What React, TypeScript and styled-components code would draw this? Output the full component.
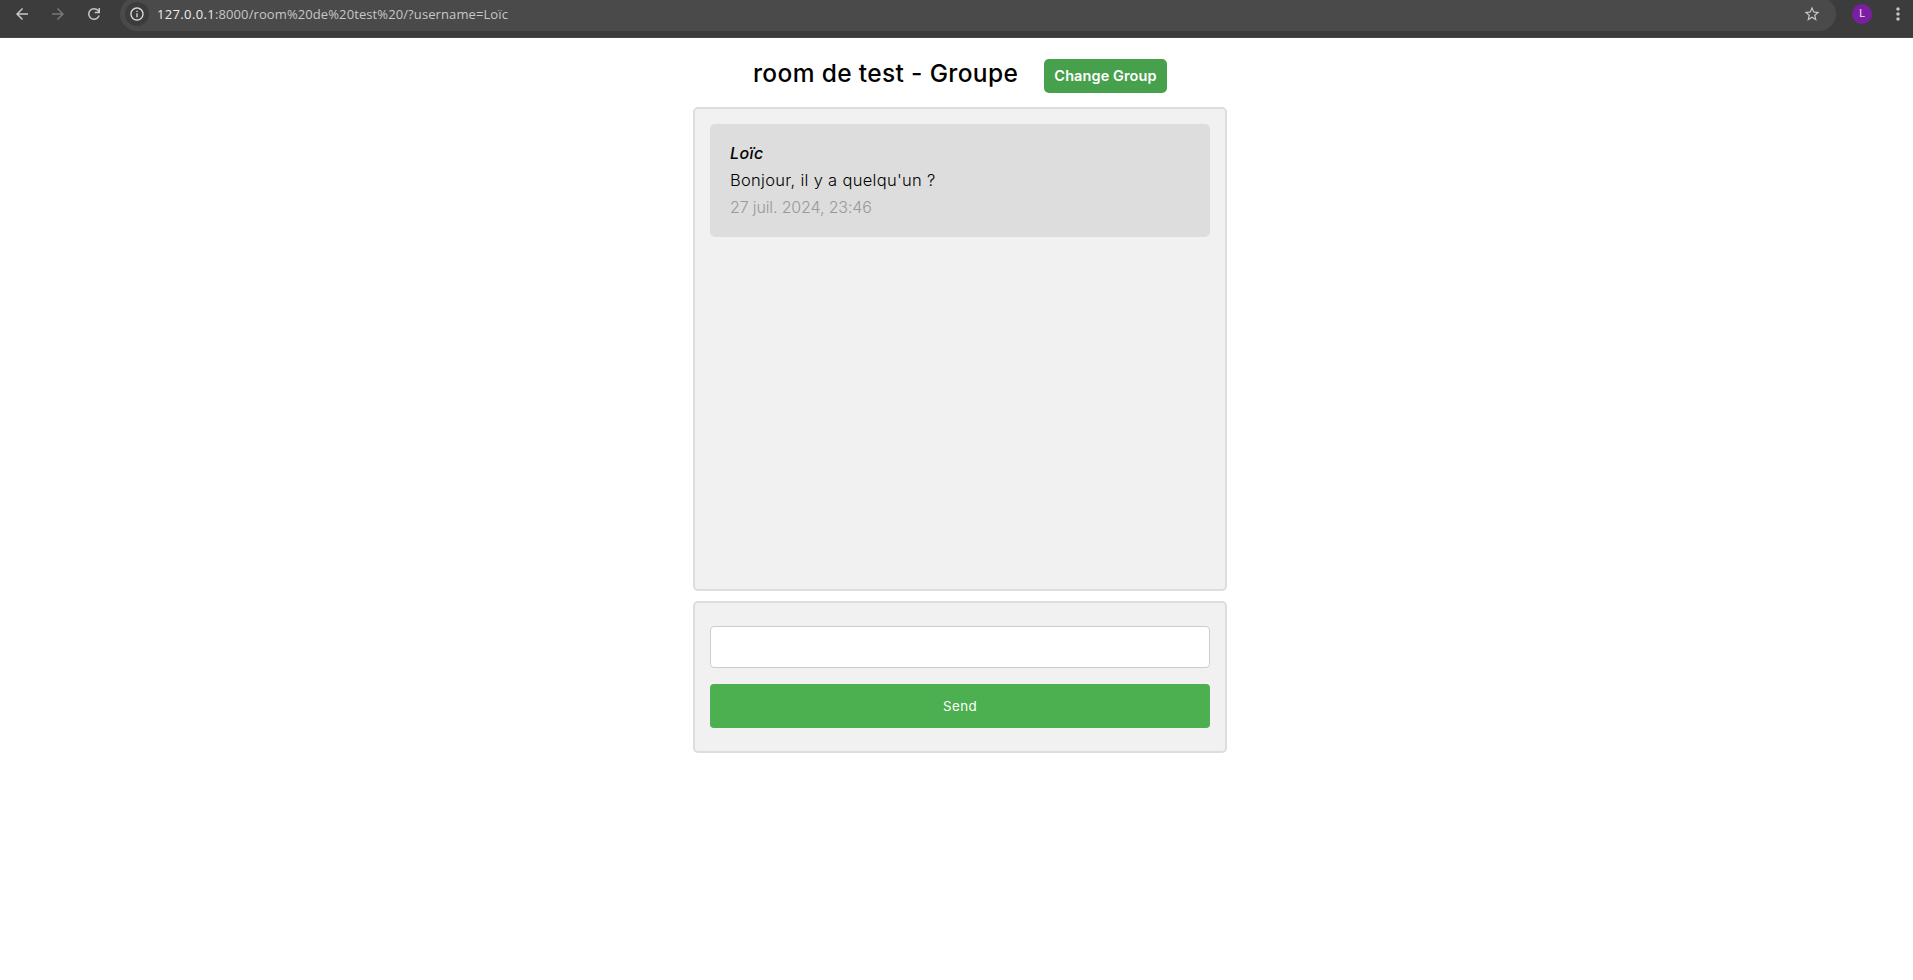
import React from 'react';
import styled, { createGlobalStyle } from 'styled-components';

const GlobalStyle = createGlobalStyle`
  * { box-sizing: border-box; }
  html, body { margin: 0; background: #fff; }
  body { font-family: Inter, sans-serif; font-size: 16px; color: #000; overflow: hidden; }
`;

const Toolbar = styled.header`
  display: flex;
  align-items: flex-start;
  height: 38px;
  padding-left: 12px;
  background: #3c3c3c;
  border-bottom: 1px solid #474747;
  overflow: hidden;
`;

const NavGroup = styled.nav`
  display: flex;
  gap: 16px;
  width: 108px;
  padding-top: 4px;
`;

const NavButton = styled.button<{ $dim?: boolean }>`
  display: grid;
  place-items: center;
  width: 20px;
  height: 20px;
  padding: 0;
  border: 0;
  background: none;
  color: ${(p) => (p.$dim ? '#777' : '#c7c7c7')};
`;

const AddressBar = styled.div`
  display: flex;
  align-items: center;
  flex: 0 0 1716px;
  height: 34px;
  margin-top: -3px;
  padding: 0 15px 0 5px;
  border-radius: 17px;
  background: #4a4a4a;
  color: #c7c7c7;
`;

const SiteInfo = styled.span`
  display: grid;
  place-items: center;
  width: 24px;
  height: 24px;
  border-radius: 50%;
  background: #3c3c3c;
  color: #dcdcdc;
`;

const Url = styled.span`
  flex: 1;
  margin-left: 8px;
  font: 400 13px/20px 'Open Sans', sans-serif;
  letter-spacing: 0.1px;
  color: #c7c7c7;
`;

const Host = styled.span`
  letter-spacing: 0.35px;
  color: #ececec;
`;

const Avatar = styled.span`
  width: 20px;
  height: 20px;
  margin: 4px 0 0 16px;
  border-radius: 50%;
  background: #7b1fa2;
  color: #f0e4f5;
  font: 400 10.5px/20px Roboto, sans-serif;
  text-align: center;
`;

const MenuButton = styled(NavButton)`
  margin: 4px 0 0 16px;
`;

const Page = styled.main`
  width: 534px;
  margin-left: 693px;
`;

const Heading = styled.div`
  display: flex;
  align-items: flex-start;
  height: 69px;
  padding: 21px 0 0 60px;
`;

const Title = styled.h2`
  width: 291px;
  margin: 0;
  font-size: 24.5px;
  font-weight: 450;
  line-height: 28px;
  letter-spacing: 0.35px;
  white-space: nowrap;
`;

const ChangeButton = styled.button`
  width: 123px;
  height: 34px;
  padding: 0;
  border: 0;
  border-radius: 5px;
  background: #47a04b;
  color: #fff;
  font: 600 14.5px/34px Inter, sans-serif;
  letter-spacing: 0.1px;
  white-space: nowrap;
`;

const Panel = styled.section<{ $height: number }>`
  height: ${(p) => p.$height}px;
  margin-bottom: 10px;
  padding: 15px;
  border: 2px solid #ddd;
  border-radius: 5px;
  background: #f1f1f1;
`;

const Message = styled.article`
  height: 113px;
  padding: 16px 20px;
  border-radius: 5px;
  background: #ddd;
  line-height: 27px;
`;

const Author = styled.div`
  font-style: italic;
  font-weight: 500;
  letter-spacing: 0.45px;
`;

const Body = styled.div`
  font-size: 16.5px;
  font-weight: 350;
  letter-spacing: 0.3px;
`;

const Time = styled.time`
  display: block;
  color: #999;
  font-weight: 350;
  letter-spacing: -0.14px;
`;

const Form = styled.form`
  display: flex;
  flex-direction: column;
  gap: 16px;
  padding-top: 8px;
`;

const Field = styled.input`
  height: 42px;
  padding: 12px;
  border: 1px solid #ccc;
  border-radius: 4px;
  background: #fff;
  outline: none;
`;

const SendButton = styled.button`
  height: 44px;
  border: 0;
  border-radius: 4px;
  background: #4caf50;
  color: #fff;
  font: 400 13.33px Inter, sans-serif;
  letter-spacing: 0.4px;
`;

const Icon = ({ d, size = 18 }: { d: string; size?: number }) => (
  <svg width={size} height={size} viewBox="0 0 24 24" fill="currentColor">
    <path d={d} />
  </svg>
);

const icons = {
  back: 'M20 11H7.83l5.59-5.59L12 4l-8 8 8 8 1.41-1.41L7.83 13H20v-2z',
  forward: 'M12 4l-1.41 1.41L16.17 11H4v2h12.17l-5.58 5.59L12 20l8-8z',
  reload:
    'M12 20q-3.35 0-5.675-2.325T4 12q0-3.35 2.325-5.675T12 4q1.725 0 3.3.7125T18 6.75V4h2v7h-7V9h4.2q-.8-1.4-2.1875-2.2T12 6Q9.5 6 7.75 7.75T6 12q0 2.5 1.75 4.25T12 18q1.925 0 3.475-1.1T17.65 14h2.1q-.7 2.65-2.85 4.325T12 20z',
  info: 'M11 7h2v2h-2zm0 4h2v6h-2zm1-9C6.48 2 2 6.48 2 12s4.48 10 10 10 10-4.48 10-10S17.52 2 12 2zm0 18c-4.41 0-8-3.59-8-8s3.59-8 8-8 8 3.59 8 8-3.59 8-8 8z',
  star: 'M22 9.24l-7.19-.62L12 2 9.19 8.63 2 9.24l5.46 4.73L5.82 21 12 17.27 18.18 21l-1.63-7.03L22 9.24zM12 15.4l-3.76 2.27 1-4.28-3.32-2.88 4.38-.38L12 6.1l1.71 4.04 4.38.38-3.32 2.88 1 4.28L12 15.4z',
  more: 'M12 8c1.1 0 2-.9 2-2s-.9-2-2-2-2 .9-2 2 .9 2 2 2zm0 2c-1.1 0-2 .9-2 2s.9 2 2 2 2-.9 2-2-.9-2-2-2zm0 6c-1.1 0-2 .9-2 2s.9 2 2 2 2-.9 2-2-.9-2-2-2z',
};

export default function App() {
  return (
    <>
      <GlobalStyle />
      <Toolbar>
        <NavGroup>
          <NavButton aria-label="Back"><Icon d={icons.back} /></NavButton>
          <NavButton aria-label="Forward" $dim><Icon d={icons.forward} /></NavButton>
          <NavButton aria-label="Reload"><Icon d={icons.reload} /></NavButton>
        </NavGroup>
        <AddressBar>
          <SiteInfo><Icon d={icons.info} size={16} /></SiteInfo>
          <Url><Host>127.0.0.1</Host>:8000/room%20de%20test%20/?username=Loïc</Url>
          <Icon d={icons.star} />
        </AddressBar>
        <Avatar>L</Avatar>
        <MenuButton aria-label="Menu"><Icon d={icons.more} size={20} /></MenuButton>
      </Toolbar>
      <Page>
        <Heading>
          <Title>room de test - Groupe</Title>
          <ChangeButton>Change Group</ChangeButton>
        </Heading>
        <Panel $height={484}>
          <Message>
            <Author>Loïc</Author>
            <Body>Bonjour, il y a quelqu'un ?</Body>
            <Time>27 juil. 2024, 23:46</Time>
          </Message>
        </Panel>
        <Panel $height={152}>
          <Form>
            <Field type="text" aria-label="Message" />
            <SendButton type="button">Send</SendButton>
          </Form>
        </Panel>
      </Page>
    </>
  );
}
